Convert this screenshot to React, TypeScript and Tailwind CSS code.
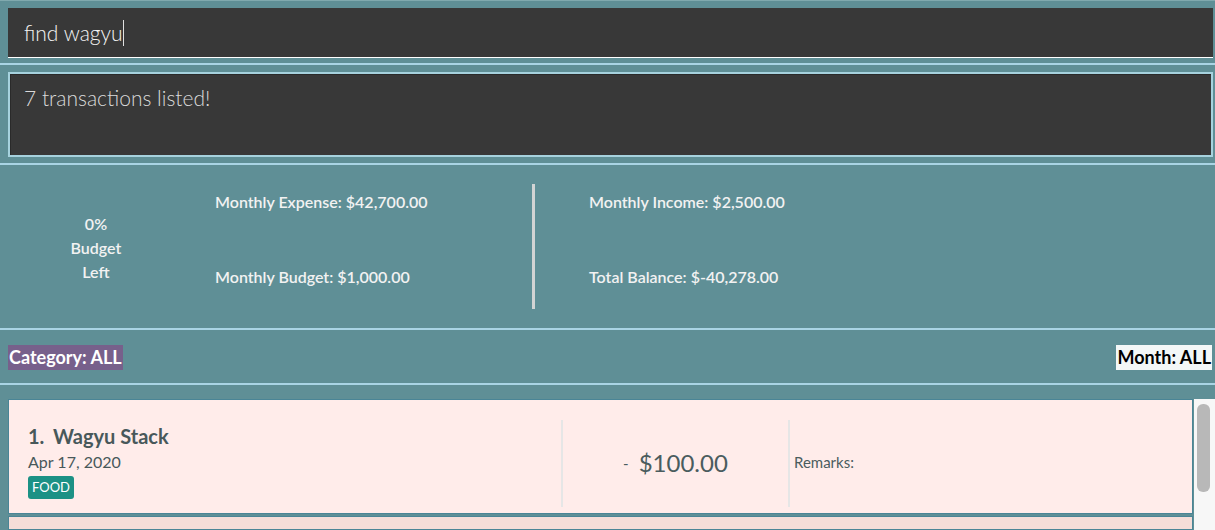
const Separator = () => <div className="h-[2px] w-full bg-[#a9d4e4]" />;

const StatLine = ({ text }: { text: string }) => (
  <div className="h-[24px] leading-[24px] text-[16px] font-semibold text-[#f2f2f2]">{text}</div>
);

const App = () => {
  return (
    <div
      className="w-[1215px] h-[530px] overflow-hidden bg-[#5f8f96] flex flex-col"
      style={{ fontFamily: "Lato, 'Open Sans', sans-serif" }}
    >
      <div className="h-[1px] bg-[#80a9ae]" />
      {/* command box */}
      <div className="pt-[7px] pl-2 pr-[2px] pb-[5px]">
        <div className="h-[50px] bg-[#383838] border-b border-white flex items-center pl-4">
          <span className="text-[21px] font-light text-[#f4f4f4]">find wagyu</span>
          <span className="w-[1px] h-[26px] bg-[#e0e0e0]" />
        </div>
      </div>
      <Separator />
      {/* result box */}
      <div className="pt-[7px] pl-2 pr-[2px] pb-[6px]">
        <div className="h-[85px] border-2 border-[#a6d2de] bg-[#383838]">
          <div className="h-full border-t border-l border-[#2a2a2a] pl-[13px] pt-[7px] text-[21px] font-light text-[#dadada]">
            7 transactions listed!
          </div>
        </div>
      </div>
      <Separator />
      {/* stats */}
      <div className="h-[163px] flex">
        <div className="w-[192px] flex flex-col items-center justify-center pt-[2px]">
          <StatLine text="0%" />
          <StatLine text="Budget" />
          <StatLine text="Left" />
        </div>
        <div className="w-[340px] pl-[23px] pt-[25px] flex flex-col gap-[51px]">
          <StatLine text="Monthly Expense: $42,700.00" />
          <StatLine text="Monthly Budget: $1,000.00" />
        </div>
        <div className="pt-[19px]">
          <div className="w-[3px] h-[125px] bg-[#d2d4d4]" />
        </div>
        <div className="pl-[54px] pt-[25px] flex flex-col gap-[51px]">
          <StatLine text="Monthly Income: $2,500.00" />
          <StatLine text="Total Balance: $-40,278.00" />
        </div>
      </div>
      <Separator />
      {/* filters */}
      <div className="h-[53px] flex items-center justify-between pl-2 pr-[3px] pt-[2px]">
        <div className="h-[25px] px-[1px] bg-[#77608b] text-white font-bold text-[18px] leading-[25px]">Category: ALL</div>
        <div className="h-[25px] px-[1px] bg-[#f3f7f7] text-black font-bold text-[18px] leading-[25px]">Month: ALL</div>
      </div>
      <Separator />
      {/* list */}
      <div className="flex-1 flex pt-[14px] pl-2">
        <div className="flex-1 flex flex-col gap-[2px]">
          <div className="h-[115px] border border-[#4a8596] bg-[#ffecea] flex">
            <div className="w-[552px] pl-[19px] pt-[23px] text-[#48585a]">
              <div className="flex text-[20px] font-bold leading-[26px]">
                <span className="w-[25px]">1.</span>
                <span>Wagyu Stack</span>
              </div>
              <div className="text-[16px] leading-[24px] mt-[1px]">Apr 17, 2020</div>
              <div className="inline-block h-[23px] px-[4px] rounded-[3px] bg-[#1c9185] text-white text-[13px] leading-[23px]">
                FOOD
              </div>
            </div>
            <div className="pt-[20px] pb-[6px]">
              <div className="w-[2px] h-full bg-[#e6e6e6]" />
            </div>
            <div className="w-[225px] flex items-center justify-center pt-[12px] text-[#4a5c5e]">
              <span className="text-[15px] mr-[10px] mt-[2px]">-</span>
              <span className="text-[24px]">$100.00</span>
            </div>
            <div className="pt-[20px] pb-[6px]">
              <div className="w-[2px] h-full bg-[#e6e6e6]" />
            </div>
            <div className="flex items-center pl-[4px] pt-[12px] text-[15px] text-[#4a5c5e]">Remarks:</div>
          </div>
          <div className="flex-1 border border-[#4a8596] bg-[#f4ddd8]" />
        </div>
        <div className="w-[21px] ml-[1px] bg-[#f7f7f7] pt-[5px] pl-[3px] pr-[5px]">
          <div className="h-[88px] rounded-[6px] bg-[#b8b8b8]" />
        </div>
      </div>
    </div>
  );
};

export default App;
